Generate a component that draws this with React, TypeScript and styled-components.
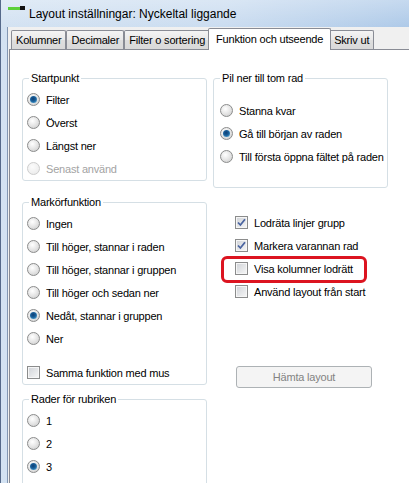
import styled, {createGlobalStyle, css} from 'styled-components'

const GlobalStyle = createGlobalStyle`
  html, body {
    margin: 0;
    padding: 0;
    background: #fff;
  }

  body {
    font-family: 'Liberation Sans', Arial, sans-serif;
    font-size: 11px;
    letter-spacing: -0.2px;
    color: #000;
  }
`

const AppIcon = () => (
   <IconSvg width={17} height={5} viewBox="0 0 17 5">
      <rect x={0} y={1} width={12} height={3} fill="#5cd03a"/>
      <rect x={12} y={0} width={5} height={4} fill="#111"/>
   </IconSvg>
)

const CheckMark = () => (
   <svg width={11} height={11} viewBox="0 0 11 11">
      <path d="M2 5.5 L4.4 8 L9 2.2" fill="none" stroke="#4a64a0" strokeWidth={1.8}/>
   </svg>
)

interface IOption {
   label: string
   checked?: boolean
   disabled?: boolean
   gap?: number
}

const RadioRow = ({label, checked, disabled, gap}: IOption) => (
   <Row $disabled={disabled} $gap={gap}>
      <RadioDot $checked={checked} $disabled={disabled}/>
      <span>{label}</span>
   </Row>
)

const CheckRow = ({label, checked, gap, highlighted}: IOption & {highlighted?: boolean}) => (
   <Row $gap={gap} $highlighted={highlighted}>
      <CheckBox>{checked && <CheckMark/>}</CheckBox>
      <span>{label}</span>
   </Row>
)

const App = () => {
   return (
      <>
         <GlobalStyle/>
         <Window>
            <TitleBar>
               <AppIcon/>
               <span>Layout inställningar: Nyckeltal liggande</span>
            </TitleBar>
            <Client>
               <TabStrip>
                  <Tab>Kolumner</Tab>
                  <Tab>Decimaler</Tab>
                  <Tab>Filter o sortering</Tab>
                  <Tab $active>Funktion och utseende</Tab>
                  <Tab>Skriv ut</Tab>
               </TabStrip>
               <Panel>
                  <LeftColumn>
                     <Group>
                        <legend>Startpunkt</legend>
                        <GroupBody>
                           <RadioRow label="Filter" checked/>
                           <RadioRow label="Överst"/>
                           <RadioRow label="Längst ner"/>
                           <RadioRow label="Senast använd" disabled/>
                        </GroupBody>
                     </Group>
                     <Group $mt={14}>
                        <legend>Markörfunktion</legend>
                        <GroupBody>
                           <RadioRow label="Ingen"/>
                           <RadioRow label="Till höger, stannar i raden"/>
                           <RadioRow label="Till höger, stannar i gruppen"/>
                           <RadioRow label="Till höger och sedan ner"/>
                           <RadioRow label="Nedåt, stannar i gruppen" checked/>
                           <RadioRow label="Ner"/>
                           <CheckRow label="Samma funktion med mus" gap={11}/>
                        </GroupBody>
                     </Group>
                     <Group $mt={7}>
                        <legend>Rader för rubriken</legend>
                        <GroupBody>
                           <RadioRow label="1"/>
                           <RadioRow label="2"/>
                           <RadioRow label="3" checked/>
                           <RadioRow label=""/>
                        </GroupBody>
                     </Group>
                  </LeftColumn>
                  <RightColumn>
                     <Group>
                        <legend>Pil ner till tom rad</legend>
                        <GroupBody $pad="14px 0 19px 6px">
                           <RadioRow label="Stanna kvar"/>
                           <RadioRow label="Gå till början av raden" checked/>
                           <RadioRow label="Till första öppna fältet på raden"/>
                        </GroupBody>
                     </Group>
                     <CheckList>
                        <CheckRow label="Lodräta linjer grupp" checked/>
                        <CheckRow label="Markera varannan rad" checked/>
                        <CheckRow label="Visa kolumner lodrätt" highlighted/>
                        <CheckRow label="Använd layout från start"/>
                     </CheckList>
                     <Button disabled>Hämta layout</Button>
                  </RightColumn>
               </Panel>
            </Client>
         </Window>
      </>
   )
}

export default App

const Window = styled.div`
  width: 409px;
  height: 483px;
  overflow: hidden;
  box-sizing: border-box;
  display: flex;
  flex-direction: column;
  border-left: 1px solid #55698a;
  background: linear-gradient(180deg, rgba(255, 255, 255, 0.3), rgba(255, 255, 255, 0) 28px),
  linear-gradient(90deg, #d3e2f2 0%, #cadcf0 55%, #adc9e8 100%);
`

const TitleBar = styled.div`
  height: 27px;
  flex: none;
  display: flex;
  align-items: center;
  gap: 4px;
  padding-left: 7px;
  font-size: 12px;
  letter-spacing: 0;
  color: #000;
`

const IconSvg = styled.svg`
  align-self: flex-start;
  margin-top: 6px;
  flex: none;
`

const Client = styled.div`
  flex: 1;
  min-height: 0;
  margin-left: 6px;
  padding-left: 1px;
  border-left: 1px solid #8397b3;
  background: #f0f0f0;
  display: flex;
  flex-direction: column;
`

const TabStrip = styled.div`
  height: 23px;
  box-sizing: border-box;
  padding: 1px 0 0 2px;
  margin-bottom: -1px;
  display: flex;
  align-items: flex-end;
  position: relative;
  z-index: 1;
`

const Tab = styled.div<{ $active?: boolean }>`
  box-sizing: border-box;
  height: 19px;
  margin-bottom: 1px;
  padding: 0 4px;
  display: flex;
  align-items: center;
  border: 1px solid #898c95;
  border-bottom: none;
  border-radius: 2px 2px 0 0;
  background: linear-gradient(#f4f4f4, #e8e8e8 50%, #dedede 51%, #d9d9d9);
  white-space: nowrap;

  ${p => p.$active && css`
    height: 22px;
    margin: 0 -2px;
    padding: 0 7px 2px;
    background: #fff;
    position: relative;
    z-index: 1;
  `}
`

const Panel = styled.div`
  flex: 1;
  background: #fff;
  border-top: 1px solid #898c95;
  border-left: 1px solid #898c95;
  padding: 21px 0 0 12px;
  display: flex;
  align-items: flex-start;
  gap: 6px;
`

const LeftColumn = styled.div`
  width: 185px;
  display: flex;
  flex-direction: column;
`

const RightColumn = styled.div`
  width: 175px;
  display: flex;
  flex-direction: column;
`

const Group = styled.fieldset<{ $mt?: number }>`
  margin: ${p => p.$mt || 0}px 0 0;
  padding: 0;
  min-inline-size: 0;
  border: 1px solid #d5dfe5;
  border-radius: 3px;

  legend {
    margin-left: 6px;
    padding: 0 2px;
    line-height: 14px;
    color: #000;
  }
`

const GroupBody = styled.div<{ $pad?: string }>`
  display: flex;
  flex-direction: column;
  padding: ${p => p.$pad || '3px 0 0 4px'};
`

const Row = styled.div<{ $disabled?: boolean; $gap?: number; $highlighted?: boolean }>`
  height: 23px;
  margin-top: ${p => p.$gap || 0}px;
  display: flex;
  align-items: center;
  align-self: flex-start;
  gap: 6px;
  position: relative;
  white-space: nowrap;
  color: ${p => p.$disabled ? '#a3a3a3' : '#000'};

  ${p => p.$highlighted && css`
    &::after {
      content: '';
      position: absolute;
      inset: -1px -14px -3px -14px;
      border: 3px solid #dc1420;
      border-radius: 6px;
    }
  `}
`

const RadioDot = styled.span<{ $checked?: boolean; $disabled?: boolean }>`
  width: 13px;
  height: 13px;
  flex: none;
  box-sizing: border-box;
  border-radius: 50%;
  position: relative;
  border: 1px solid ${p => p.$disabled ? '#cdcdcd' : '#8b8c8c'};
  background: ${p => p.$disabled
          ? 'radial-gradient(circle at 40% 35%, #fbfbfb 0%, #f0f0f0 60%, #e6e6e6 100%)'
          : 'radial-gradient(circle at 40% 35%, #ffffff 0%, #e8e8e8 45%, #c8c8c8 100%)'};

  ${p => p.$checked && css`
    &::after {
      content: '';
      position: absolute;
      left: 2px;
      top: 2px;
      width: 7px;
      height: 7px;
      border-radius: 50%;
      background: radial-gradient(circle at 45% 40%, #0e3f74 0%, #19609b 45%, #6fc3ea 100%);
    }
  `}
`

const CheckBox = styled.span`
  width: 13px;
  height: 13px;
  flex: none;
  box-sizing: border-box;
  border: 1px solid #8b8c8c;
  box-shadow: inset 0 0 0 1px #f6f6f6;
  background: linear-gradient(135deg, #cfd2d7, #f7f7f7);
  display: flex;
  align-items: center;
  justify-content: center;
`

const CheckList = styled.div`
  margin-top: 23px;
  padding-left: 22px;
  display: flex;
  flex-direction: column;
`

const Button = styled.button`
  width: 136px;
  height: 22px;
  margin: 63px 0 0 23px;
  padding: 0;
  border: 1px solid #adb2b5;
  border-radius: 3px;
  background: #f4f4f4;
  color: #838383;
  font: inherit;
  letter-spacing: inherit;
`
